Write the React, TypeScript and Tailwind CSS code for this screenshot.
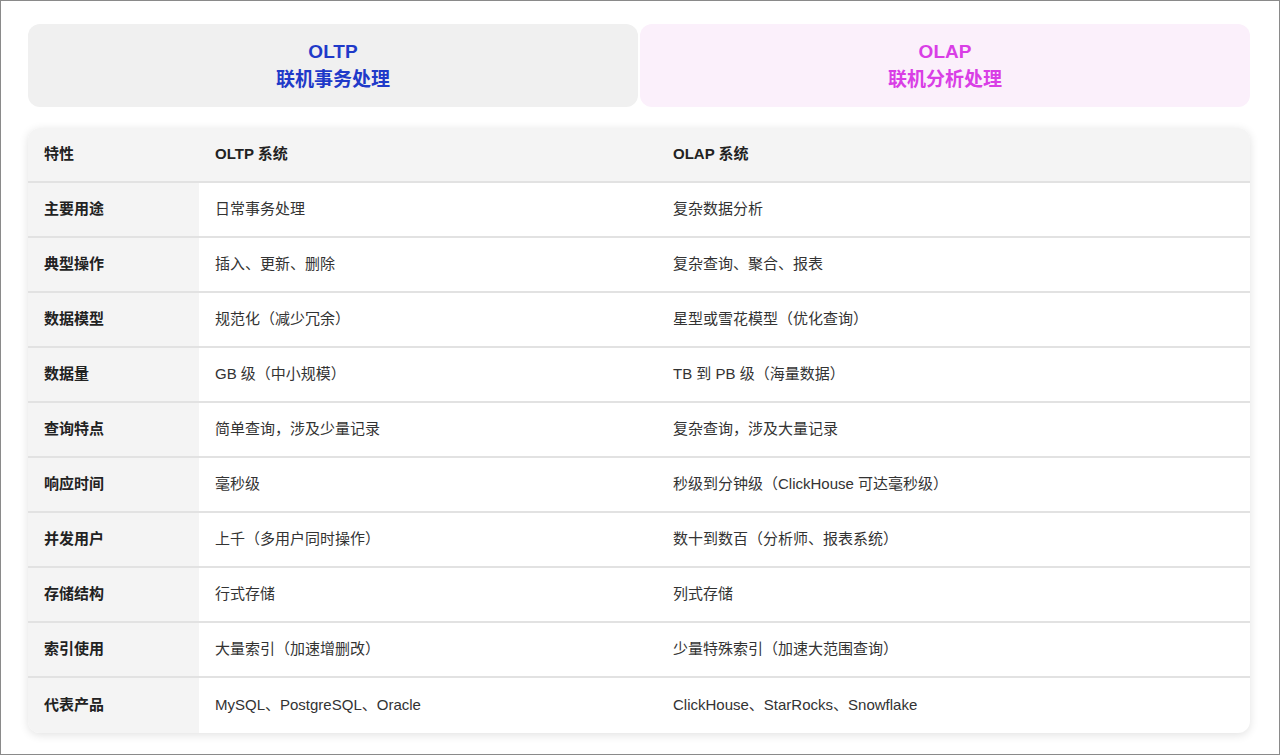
const rows = [
  ["主要用途", "日常事务处理", "复杂数据分析"],
  ["典型操作", "插入、更新、删除", "复杂查询、聚合、报表"],
  ["数据模型", "规范化（减少冗余）", "星型或雪花模型（优化查询）"],
  ["数据量", "GB 级（中小规模）", "TB 到 PB 级（海量数据）"],
  ["查询特点", "简单查询，涉及少量记录", "复杂查询，涉及大量记录"],
  ["响应时间", "毫秒级", "秒级到分钟级（ClickHouse 可达毫秒级）"],
  ["并发用户", "上千（多用户同时操作）", "数十到数百（分析师、报表系统）"],
  ["存储结构", "行式存储", "列式存储"],
  ["索引使用", "大量索引（加速增删改）", "少量特殊索引（加速大范围查询）"],
  ["代表产品", "MySQL、PostgreSQL、Oracle", "ClickHouse、StarRocks、Snowflake"],
];

export default function App() {
  return (
    <div
      className="h-[755px] w-[1280px] overflow-hidden border border-[#8a8a8a] bg-white text-[#333]"
      style={{ fontFamily: '"Liberation Sans", "Noto Sans CJK SC", sans-serif' }}
    >
      <div className="ml-[27px] mt-[23px] w-[1222px]">
        {/* title cards */}
        <div className="flex gap-[2px]">
          <div className="flex h-[83px] flex-1 flex-col items-center justify-center rounded-xl bg-[#f0f0f0] text-[19px] font-bold leading-[28px] text-[#1f3ac9]">
            <div>OLTP</div>
            <div>联机事务处理</div>
          </div>
          <div className="flex h-[83px] flex-1 flex-col items-center justify-center rounded-xl bg-[#fbf0fb] text-[19px] font-bold leading-[28px] text-[#d93ee6]">
            <div>OLAP</div>
            <div>联机分析处理</div>
          </div>
        </div>

        {/* comparison table */}
        <div className="mt-[21px] overflow-hidden rounded-xl shadow-[0_2px_10px_rgba(0,0,0,0.12)]">
          <div className="flex h-[55px] items-center border-b-2 border-[#e2e2e2] bg-[#f4f4f4] text-[15px] font-bold text-[#222]">
            <div className="w-[171px] pl-4">特性</div>
            <div className="w-[458px] pl-4">OLTP 系统</div>
            <div className="flex-1 pl-4">OLAP 系统</div>
          </div>
          {rows.map((r, i) => (
            <div
              key={r[0]}
              className={`flex h-[55px] text-[15px] ${i < rows.length - 1 ? "border-b-2 border-[#e2e2e2]" : ""}`}
            >
              <div className="flex w-[171px] items-center bg-[#f4f4f4] pl-4 font-bold text-[#222]">{r[0]}</div>
              <div className="flex w-[458px] items-center pl-4">{r[1]}</div>
              <div className="flex flex-1 items-center pl-4">{r[2]}</div>
            </div>
          ))}
        </div>
      </div>
    </div>
  );
}
